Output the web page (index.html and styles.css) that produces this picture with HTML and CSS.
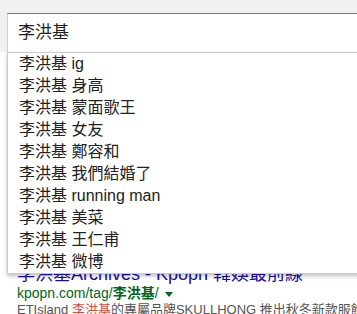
FILE: index.html
```html
<!DOCTYPE html>
<html lang="zh-Hant">
<head>
    <meta charset="UTF-8">
    <meta name="viewport" content="width=device-width, initial-scale=1.0">
    <title>李洪基 - 搜尋</title>
    <link rel="stylesheet" href="styles.css">
</head>
<body>
    <div class="page">
        <!-- Barra de búsqueda -->
        <div class="search">
            <div class="search-box">李洪基</div>
        </div>

        <!-- Sugerencias -->
        <ul class="suggest">
            <li>李洪基 ig</li>
            <li>李洪基 身高</li>
            <li>李洪基 蒙面歌王</li>
            <li>李洪基 女友</li>
            <li>李洪基 鄭容和</li>
            <li>李洪基 我們結婚了</li>
            <li>李洪基 running man</li>
            <li>李洪基 美菜</li>
            <li>李洪基 王仁甫</li>
            <li>李洪基 微博</li>
        </ul>

        <!-- Resultado -->
        <div class="result">
            <div class="result-title">李洪基Archives - Kpopn 韓娛最前線</div>
            <div class="result-url">kpopn.com/tag/<b>李洪基</b>/ <span class="arrow"></span></div>
            <div class="result-text">ETIsland <em>李洪基</em>的專屬品牌SKULLHONG 推出秋冬新款服飾</div>
        </div>
    </div>
</body>
</html>
```
FILE: styles.css
```css
/* General */
body {
    margin: 0;
    background-color: #ffffff;
    font-family: "Liberation Sans", "Noto Sans CJK TC", sans-serif;
    color: #222222;
    overflow: hidden;
}

.page {
    position: relative;
    height: 314px;
}

/* Barra de búsqueda */
.search {
    background-color: #f1f1f1;
    padding: 13px 0 0 7px;
}

.search-box {
    background-color: #ffffff;
    border-top: 1px solid #5c8290;
    border-left: 1px solid #cfcfcf;
    height: 38px;
    line-height: 38px;
    padding-left: 10px;
    font-size: 17px;
    color: #222222;
}

/* Lista de sugerencias */
.suggest {
    position: absolute;
    top: 52px;
    left: 7px;
    width: 400px;
    margin: 0;
    padding: 0;
    list-style: none;
    background-color: #ffffff;
    border: 1px solid #cccccc;
    box-shadow: 0 2px 4px rgba(0, 0, 0, 0.25);
    z-index: 2;
}

.suggest li {
    height: 22px;
    line-height: 22px;
    padding-left: 11px;
    font-size: 16px;
    color: #222222;
}

/* Resultado debajo */
.result {
    padding: 212px 0 0 17px;
    white-space: nowrap;
}

.result-title {
    font-size: 18px;
    line-height: 21px;
    color: #1a0dab;
}

.result-url {
    font-size: 14px;
    line-height: 16px;
    color: #006621;
}

.result-url b {
    font-weight: bold;
}

.arrow {
    display: inline-block;
    width: 0;
    height: 0;
    margin-left: 2px;
    vertical-align: middle;
    border-left: 4px solid transparent;
    border-right: 4px solid transparent;
    border-top: 5px solid #006621;
}

.result-text {
    font-size: 13px;
    line-height: 18px;
    color: #545454;
}

.result-text em {
    font-style: normal;
    color: #dd4b39;
}
```
